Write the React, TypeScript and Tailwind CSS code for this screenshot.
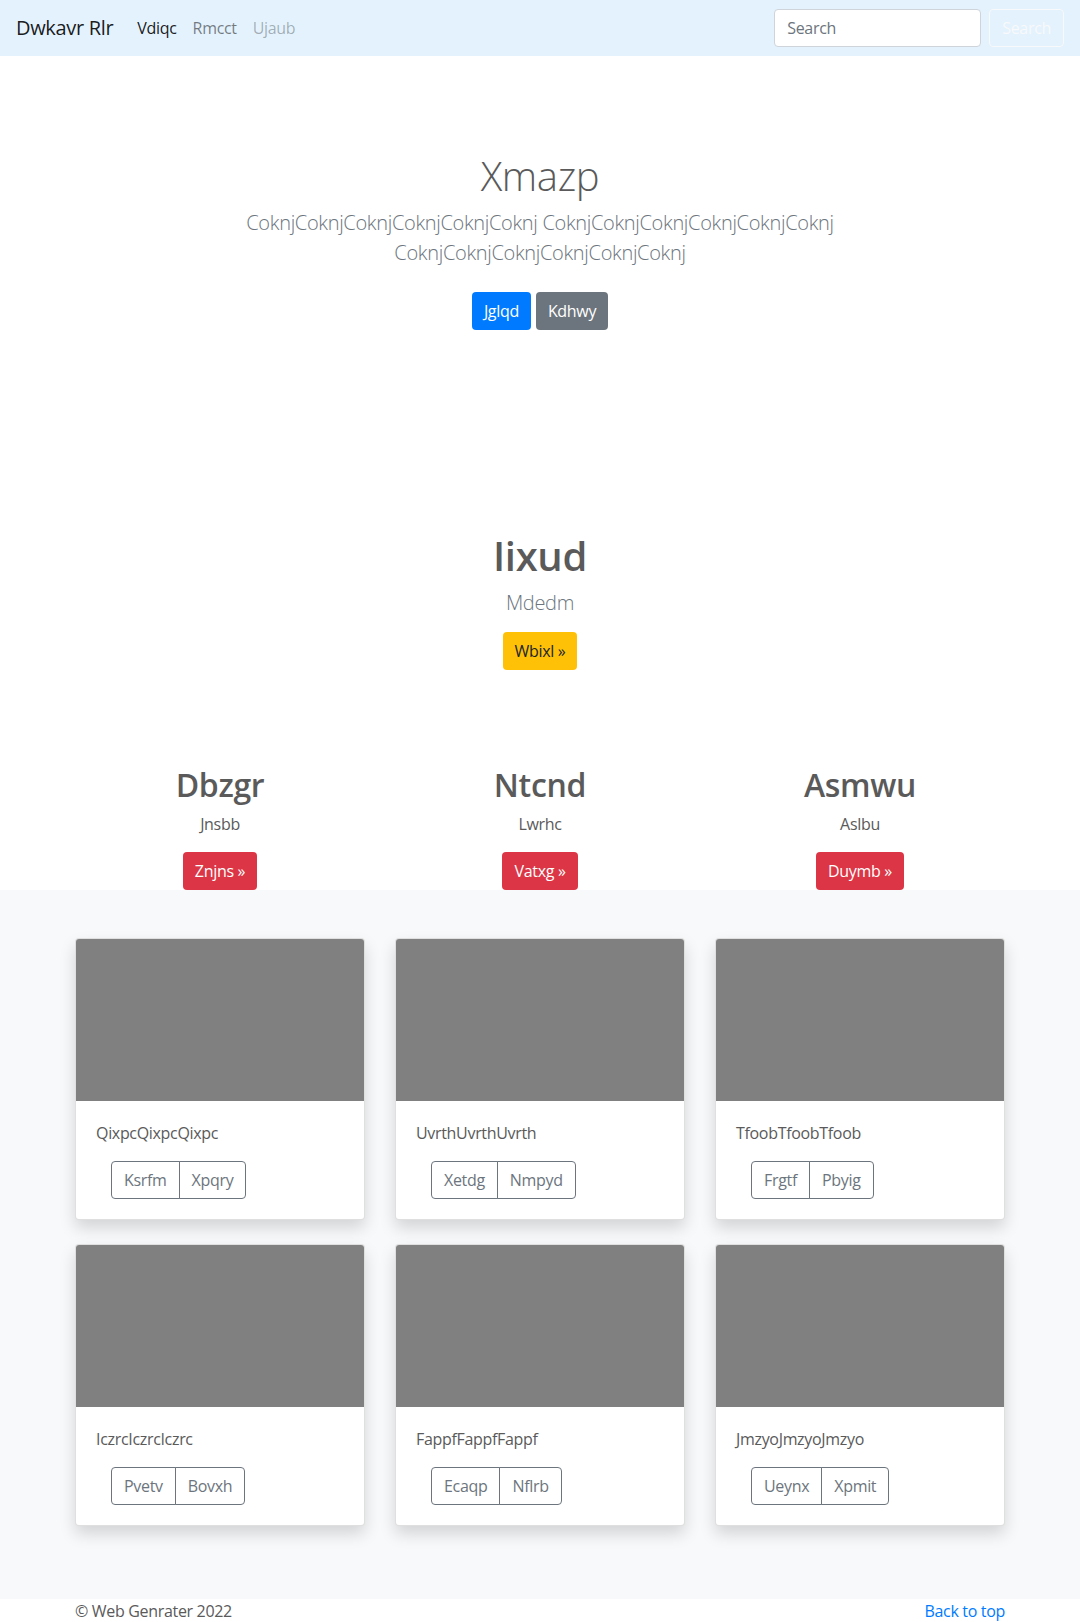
import React from 'react';

const features = [
  { title: 'Dbzgr', text: 'Jnsbb', action: 'Znjns' },
  { title: 'Ntcnd', text: 'Lwrhc', action: 'Vatxg' },
  { title: 'Asmwu', text: 'Aslbu', action: 'Duymb' },
];

const cards = [
  { text: 'QixpcQixpcQixpc', buttons: ['Ksrfm', 'Xpqry'] },
  { text: 'UvrthUvrthUvrth', buttons: ['Xetdg', 'Nmpyd'] },
  { text: 'TfoobTfoobTfoob', buttons: ['Frgtf', 'Pbyig'] },
  { text: 'IczrcIczrcIczrc', buttons: ['Pvetv', 'Bovxh'] },
  { text: 'FappfFappfFappf', buttons: ['Ecaqp', 'Nflrb'] },
  { text: 'JmzyoJmzyoJmzyo', buttons: ['Ueynx', 'Xpmit'] },
];

function Card({ text, buttons }: { text: string; buttons: string[] }) {
  return (
    <div className="bg-white border border-black/[.125] rounded overflow-hidden shadow-[0_8px_16px_rgba(0,0,0,0.15)]">
      {/* placeholder image */}
      <div className="h-[162px] bg-[#808080]"></div>
      <div className="p-5">
        <p className="leading-6 mb-4">{text}</p>
        <div className="flex ml-[15px]">
          <button className="h-[38px] px-3 border border-[#6c757d] text-[#6c757d] rounded-l">
            {buttons[0]}
          </button>
          <button className="h-[38px] px-3 -ml-px border border-[#6c757d] text-[#6c757d] rounded-r">
            {buttons[1]}
          </button>
        </div>
      </div>
    </div>
  );
}

export default function App() {
  return (
    <div className="min-h-screen bg-white text-base tracking-[-0.02em] text-[#5a5a5a] font-['Segoe_UI','Open_Sans',sans-serif]">
      {/* Navbar */}
      <nav className="h-14 bg-[#e3f2fd] px-4 flex items-center justify-between">
        <div className="flex items-center">
          <a href="#" className="text-xl text-black/90 mr-4">Dwkavr Rlr</a>
          <ul className="flex">
            <li><a href="#" className="px-2 text-black/90">Vdiqc</a></li>
            <li><a href="#" className="px-2 text-black/50">Rmcct</a></li>
            <li><a href="#" className="px-2 text-black/30">Ujaub</a></li>
          </ul>
        </div>
        <form className="flex items-center">
          <input
            type="search"
            placeholder="Search"
            className="w-[207px] h-[38px] px-3 mr-2 bg-white border border-[#ced4da] rounded text-[#495057] placeholder:text-[#6c757d] outline-none"
          />
          <button type="button" className="h-[38px] px-3 border border-[#f8f9fa] rounded text-[#f8f9fa]">
            Search
          </button>
        </form>
      </nav>

      {/* Jumbotron */}
      <section className="text-center pt-24 pb-24">
        <h1 className="text-[40px] leading-[1.2] font-light mb-2">Xmazp</h1>
        <p className="max-w-[640px] mx-auto text-xl leading-[30px] font-light text-[#6c757d]">
          CoknjCoknjCoknjCoknjCoknjCoknj CoknjCoknjCoknjCoknjCoknjCoknj CoknjCoknjCoknjCoknjCoknjCoknj
        </p>
        <div className="flex justify-center gap-[5px] mt-6 mb-2">
          <a href="#" className="h-[38px] px-3 leading-[38px] rounded bg-[#007bff] text-white">Jglqd</a>
          <a href="#" className="h-[38px] px-3 leading-[38px] rounded bg-[#6c757d] text-white">Kdhwy</a>
        </div>
      </section>

      {/* Feature */}
      <section className="text-center pt-[98px]">
        <h1 className="text-[40px] leading-[1.2] font-semibold mb-2">Iixud</h1>
        <p className="text-xl leading-[30px] font-light text-[#6c757d] mb-[14px]">Mdedm</p>
        <a href="#" className="inline-block h-[38px] px-3 leading-[38px] rounded bg-[#ffc107] text-[#212529]">
          Wbixl &raquo;
        </a>
      </section>

      {/* Marketing columns */}
      <section className="w-[960px] mx-auto pt-[96px] grid grid-cols-3">
        {features.map((f) => (
          <div key={f.title} className="px-[15px] text-center">
            <h2 className="text-[32px] leading-[1.2] font-semibold mb-2">{f.title}</h2>
            <p className="leading-6 mb-4">{f.text}</p>
            <a href="#" className="inline-block h-[38px] px-3 leading-[38px] rounded bg-[#dc3545] text-white">
              {f.action} &raquo;
            </a>
          </div>
        ))}
      </section>

      {/* Album */}
      <div className="bg-[#f8f9fa] pt-12 pb-[73px]">
        <div className="w-[960px] mx-auto px-[15px] grid grid-cols-3 gap-x-[30px] gap-y-6">
          {cards.map((c) => (
            <Card key={c.text} text={c.text} buttons={c.buttons} />
          ))}
        </div>
      </div>

      {/* Footer */}
      <footer className="w-[960px] mx-auto px-[15px] pb-12 flex justify-between leading-6">
        <p>&copy; Web Genrater 2022</p>
        <a href="#" className="text-[#007bff]">Back to top</a>
      </footer>
    </div>
  );
}
